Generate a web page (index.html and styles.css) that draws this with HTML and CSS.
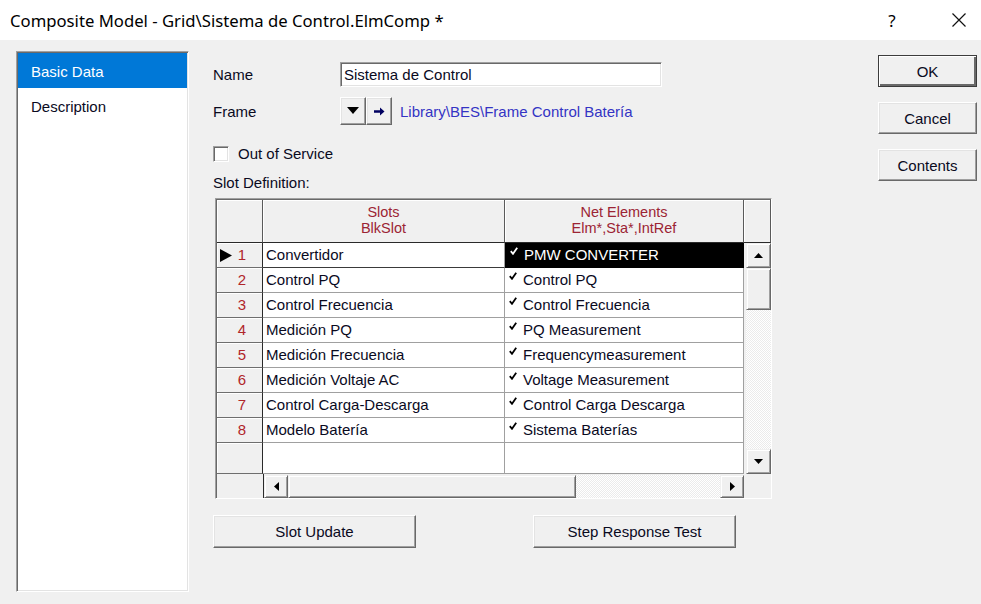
FILE: index.html
```html
<!DOCTYPE html>
<html lang="es">
<head>
<meta charset="utf-8">
<title>Composite Model</title>
<link rel="stylesheet" href="styles.css">
</head>
<body>
<div class="window">
  <header class="titlebar">
    <span class="title">Composite Model - Grid\Sistema de Control.ElmComp *</span>
    <span class="help">?</span>
    <span class="close">
      <svg width="16" height="16" viewBox="0 0 16 16"><path d="M1.5 1.5L14.5 14.5M14.5 1.5L1.5 14.5" stroke="#111" stroke-width="1.2" fill="none"/></svg>
    </span>
  </header>

  <div class="content">
    <nav class="pages">
      <div class="page active">Basic Data</div>
      <div class="page">Description</div>
    </nav>

    <main class="form">
      <div class="field name-field">
        <span class="label">Name</span>
        <div class="textbox">Sistema de Control</div>
      </div>

      <div class="field frame-field">
        <span class="label">Frame</span>
        <button class="tool-btn" type="button">
          <svg width="12" height="8" viewBox="0 0 12 8"><path d="M0 0H12L6 7Z" fill="#000"/></svg>
        </button>
        <button class="tool-btn" type="button">
          <svg width="11" height="9" viewBox="0 0 11 9"><path d="M0 3.2H6V0.5L10.5 4.5L6 8.5V5.8H0Z" fill="#000060"/></svg>
        </button>
        <span class="link">Library\BES\Frame Control Batería</span>
      </div>

      <div class="check-field">
        <span class="checkbox"></span>
        <span>Out of Service</span>
      </div>

      <div class="caption">Slot Definition:</div>

      <div class="grid">
        <div class="hd"></div>
        <div class="hd">Slots<br>BlkSlot</div>
        <div class="hd">Net Elements<br>Elm*,Sta*,IntRef</div>
        <div class="hd"></div>

        <div class="vscroll">
          <div class="sb-btn"><svg width="9" height="5" viewBox="0 0 9 5"><path d="M0 5L4.5 0L9 5Z" fill="#000"/></svg></div>
          <div class="sb-thumb"></div>
          <div class="sb-track"></div>
          <div class="sb-btn"><svg width="9" height="5" viewBox="0 0 9 5"><path d="M0 0L4.5 5L9 0Z" fill="#000"/></svg></div>
        </div>

        <div class="rh current"><svg class="cursor" width="12" height="13" viewBox="0 0 12 13"><path d="M0 0L12 6.5L0 13Z" fill="#000"/></svg>1</div>
        <div class="cell focus-row">Convertidor</div>
        <div class="cell sel"><svg class="tick" width="8" height="8" viewBox="0 0 8 8"><path d="M0.8 4.2L3 6.8L7.2 0.8" stroke="#fff" stroke-width="1.8" fill="none"/></svg>PMW CONVERTER</div>

        <div class="rh">2</div>
        <div class="cell">Control PQ</div>
        <div class="cell"><svg class="tick" width="8" height="8" viewBox="0 0 8 8"><path d="M0.8 4.2L3 6.8L7.2 0.8" stroke="#000" stroke-width="1.8" fill="none"/></svg>Control PQ</div>

        <div class="rh">3</div>
        <div class="cell">Control Frecuencia</div>
        <div class="cell"><svg class="tick" width="8" height="8" viewBox="0 0 8 8"><path d="M0.8 4.2L3 6.8L7.2 0.8" stroke="#000" stroke-width="1.8" fill="none"/></svg>Control Frecuencia</div>

        <div class="rh">4</div>
        <div class="cell">Medición PQ</div>
        <div class="cell"><svg class="tick" width="8" height="8" viewBox="0 0 8 8"><path d="M0.8 4.2L3 6.8L7.2 0.8" stroke="#000" stroke-width="1.8" fill="none"/></svg>PQ Measurement</div>

        <div class="rh">5</div>
        <div class="cell">Medición Frecuencia</div>
        <div class="cell"><svg class="tick" width="8" height="8" viewBox="0 0 8 8"><path d="M0.8 4.2L3 6.8L7.2 0.8" stroke="#000" stroke-width="1.8" fill="none"/></svg>Frequencymeasurement</div>

        <div class="rh">6</div>
        <div class="cell">Medición Voltaje AC</div>
        <div class="cell"><svg class="tick" width="8" height="8" viewBox="0 0 8 8"><path d="M0.8 4.2L3 6.8L7.2 0.8" stroke="#000" stroke-width="1.8" fill="none"/></svg>Voltage Measurement</div>

        <div class="rh">7</div>
        <div class="cell">Control Carga-Descarga</div>
        <div class="cell"><svg class="tick" width="8" height="8" viewBox="0 0 8 8"><path d="M0.8 4.2L3 6.8L7.2 0.8" stroke="#000" stroke-width="1.8" fill="none"/></svg>Control Carga Descarga</div>

        <div class="rh">8</div>
        <div class="cell">Modelo Batería</div>
        <div class="cell"><svg class="tick" width="8" height="8" viewBox="0 0 8 8"><path d="M0.8 4.2L3 6.8L7.2 0.8" stroke="#000" stroke-width="1.8" fill="none"/></svg>Sistema Baterías</div>

        <div class="rh"></div>
        <div class="cell"></div>
        <div class="cell"></div>

        <div class="filler"></div>
        <div class="hscroll">
          <div class="sb-btn"><svg width="5" height="9" viewBox="0 0 5 9"><path d="M5 0L0 4.5L5 9Z" fill="#000"/></svg></div>
          <div class="sb-thumb"></div>
          <div class="sb-track"></div>
          <div class="sb-btn"><svg width="5" height="9" viewBox="0 0 5 9"><path d="M0 0L5 4.5L0 9Z" fill="#000"/></svg></div>
        </div>
        <div class="filler"></div>
      </div>

      <div class="actions">
        <button class="btn wide" type="button">Slot Update</button>
        <button class="btn wide" type="button">Step Response Test</button>
      </div>
    </main>

    <aside class="side">
      <button class="btn default" type="button">OK</button>
      <button class="btn" type="button">Cancel</button>
      <button class="btn" type="button">Contents</button>
    </aside>
  </div>
</div>
</body>
</html>
```

FILE: styles.css
```css
* { box-sizing: border-box; }

html, body {
  margin: 0;
  padding: 0;
}

body {
  width: 981px;
  height: 604px;
  overflow: hidden;
  background: #f0f0f0;
  font-family: "Liberation Sans", Arial, sans-serif;
  font-size: 15px;
  color: #0a0a1e;
}

.window {
  display: flex;
  flex-direction: column;
  height: 604px;
}

/* ---------- title bar ---------- */
.titlebar {
  height: 40px;
  flex: none;
  background: #fff;
  display: flex;
  align-items: center;
  padding-left: 10px;
  font-family: "Noto Sans", "Open Sans", sans-serif;
  font-size: 16.7px;
  color: #000;
}

.title { flex: 1; }

.help {
  width: 16px;
  text-align: center;
  font-size: 17px;
}

.close {
  display: flex;
  margin-left: 51px;
  margin-right: 14px;
}

/* ---------- dialog body ---------- */
.content {
  flex: 1;
  display: flex;
  padding-top: 11px;
}

.pages {
  margin-left: 16px;
  width: 173px;
  height: 541px;
  padding: 1px;
  background: #fff;
  border: 1px solid;
  border-color: #a0a0a0 #fff #fff #a0a0a0;
  box-shadow: inset 1px 1px 0 #696969, inset -1px -1px 0 #e3e3e3;
}

.page {
  height: 35px;
  line-height: 37px;
  padding-left: 13px;
}

.page.active {
  background: #0078d7;
  color: #fff;
}

.form {
  margin-left: 24px;
  width: 559px;
  padding-top: 11px;
  display: flex;
  flex-direction: column;
}

.field {
  display: flex;
  align-items: center;
}

.label {
  width: 127px;
}

.name-field { height: 25px; }

.textbox {
  width: 322px;
  height: 25px;
  line-height: 23px;
  padding-left: 3px;
  background: #fff;
  border: 1px solid;
  border-color: #a0a0a0 #fff #fff #a0a0a0;
  box-shadow: inset 1px 1px 0 #696969, inset -1px -1px 0 #e3e3e3;
}

.frame-field {
  margin-top: 10px;
  height: 28px;
}

.tool-btn {
  width: 26px;
  height: 28px;
  padding: 0;
  margin: 0;
  display: flex;
  align-items: center;
  justify-content: center;
  background: #f0f0f0;
  border: 1px solid;
  border-color: #fff #696969 #696969 #fff;
  box-shadow: inset -1px -1px 0 #a0a0a0, inset 1px 1px 0 #e3e3e3;
}

.link {
  margin-left: 8px;
  color: #3434c4;
}

.check-field {
  margin-top: 21px;
  height: 16px;
  display: flex;
  align-items: center;
}

.check-field span:last-child {
  margin-top: -2px;
}

.checkbox {
  width: 16px;
  height: 16px;
  margin-right: 9px;
  background: #fff;
  border: 1px solid;
  border-color: #a0a0a0 #fff #fff #a0a0a0;
  box-shadow: inset 1px 1px 0 #696969, inset -1px -1px 0 #e3e3e3;
}

.caption {
  margin-top: 13px;
  height: 16px;
  line-height: 16px;
}

/* ---------- slot grid ---------- */
.grid {
  margin-top: 7px;
  margin-left: 2px;
  width: 557px;
  display: grid;
  grid-template-columns: 46px 242px 239px 27px;
  grid-template-rows: 43px repeat(8, 25px) 31px 24px;
  border: 1px solid;
  border-color: #a0a0a0 #fff #fff #a0a0a0;
  box-shadow: inset 1px 1px 0 #696969;
  padding: 1px 0 0 1px;
}

.hd {
  background: #f0f0f0;
  border-right: 1px solid #5a5a5a;
  border-bottom: 1px solid #2a2a2a;
  box-shadow: inset 1px 1px 0 #fff;
  color: #9c2434;
  text-align: center;
  line-height: 16px;
  padding-top: 4px;
  font-size: 14.5px;
}

.rh {
  background: #f0f0f0;
  border-right: 1px solid #2a2a2a;
  border-bottom: 1px solid #6e6e6e;
  box-shadow: inset 1px 1px 0 #fff;
  color: #b0262a;
  text-align: right;
  padding-right: 16px;
  line-height: 24px;
  position: relative;
}

.rh .cursor {
  position: absolute;
  left: 3px;
  top: 6px;
}

.cell {
  background: #fff;
  border-right: 1px solid #a0a0a0;
  border-bottom: 1px solid #a0a0a0;
  padding-left: 3px;
  line-height: 24px;
  white-space: nowrap;
  overflow: hidden;
}

.cell.focus-row {
  border-bottom-color: #3a3a3a;
}

.cell.sel {
  background: #000;
  color: #fff;
  border: 1px solid #000;
  line-height: 22px;
  padding-left: 3px;
}

.tick {
  margin-right: 6px;
  vertical-align: 5px;
}

.cell .tick { margin-left: 1px; }

/* ---------- scroll bars ---------- */
.vscroll {
  grid-column: 4;
  grid-row: 2 / 11;
  display: flex;
  flex-direction: column;
  padding-left: 2px;
  background: #f0f0f0;
}

.hscroll {
  grid-column: 2 / 4;
  display: flex;
  padding-top: 1px;
  border-left: 1px solid #2a2a2a;
  background: #f0f0f0;
}

.filler { background: #f0f0f0; }

.sb-btn {
  flex: none;
  display: flex;
  align-items: center;
  justify-content: center;
  background: #f0f0f0;
  border: 1px solid;
  border-color: #f0f0f0 #696969 #696969 #f0f0f0;
  box-shadow: inset 1px 1px 0 #fff, inset -1px -1px 0 #a0a0a0;
}

.vscroll .sb-btn { height: 25px; }
.hscroll .sb-btn { width: 24px; }

.sb-thumb {
  flex: none;
  background: #f0f0f0;
  border: 1px solid;
  border-color: #f0f0f0 #696969 #696969 #f0f0f0;
  box-shadow: inset 1px 1px 0 #fff, inset -1px -1px 0 #a0a0a0;
}

.vscroll .sb-thumb { height: 42px; }
.hscroll .sb-thumb { width: 288px; }

.sb-track {
  flex: 1;
  background-color: #f7f7f7;
  background-image: repeating-conic-gradient(#fff 0 25%, #ebebeb 0 50%);
  background-size: 2px 2px;
}

/* ---------- buttons ---------- */
.btn {
  font-family: inherit;
  font-size: 15px;
  color: #0a0a1e;
  background: #f0f0f0;
  padding: 0;
  border: 1px solid;
  border-color: #fff #696969 #696969 #fff;
  box-shadow: inset -1px -1px 0 #a0a0a0, inset 1px 1px 0 #e3e3e3;
}

.actions {
  margin-top: 16px;
  display: flex;
  gap: 117px;
}

.btn.wide {
  width: 203px;
  height: 33px;
}

.side {
  margin-left: auto;
  margin-right: 4px;
  padding-top: 4px;
  display: flex;
  flex-direction: column;
  gap: 15px;
}

.side .btn {
  width: 99px;
  height: 32px;
}

.btn.default {
  border-color: #3c3c3c;
  box-shadow: inset 1px 1px 0 #fff, inset -2px -2px 0 #696969;
}
```
